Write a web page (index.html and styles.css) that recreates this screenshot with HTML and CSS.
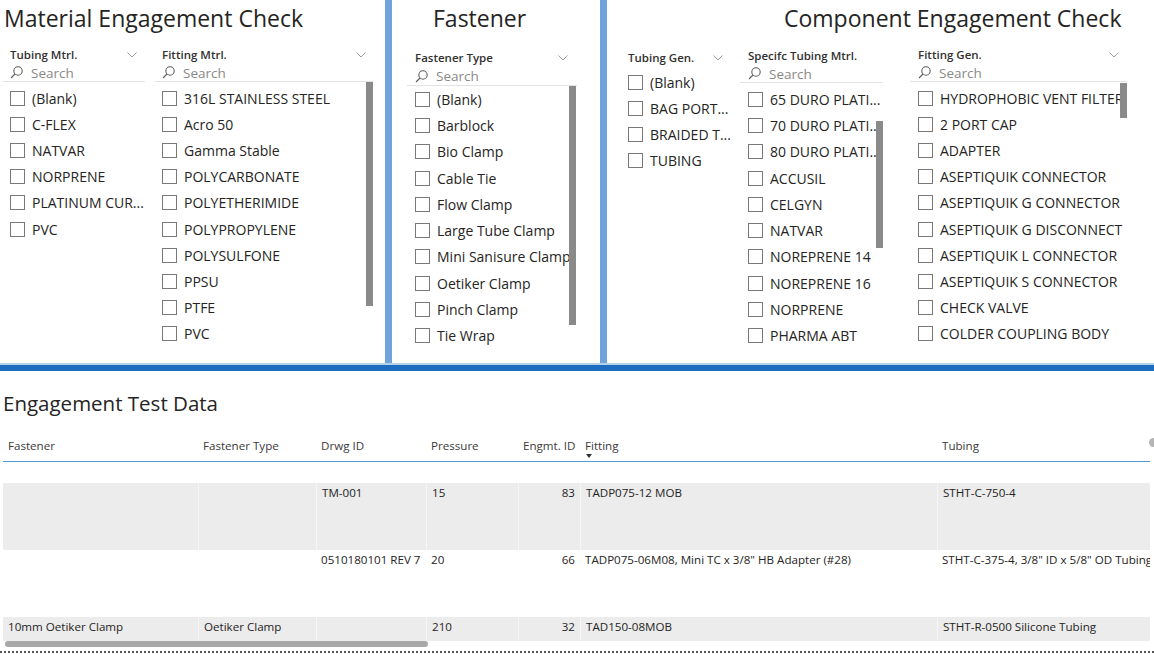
FILE: index.html
```html
<!DOCTYPE html>
<html>
<head>
<meta charset="utf-8">
<title>Engagement Check</title>
<link rel="stylesheet" href="styles.css">
</head>
<body>
<div class="top">
  <section class="panel p1">
    <h1 class="title">Material Engagement Check</h1>
    <div class="slicers">
      <div class="slicer w-tub">
        <div class="sl-head"><span>Tubing Mtrl.</span><svg class="chev" viewBox="0 0 10 6"><polyline points="0.5,0.5 5,5 9.5,0.5"/></svg></div>
        <div class="sl-search"><svg class="mag" viewBox="0 0 13 13"><circle cx="8" cy="5" r="4.2"/><line x1="5" y1="8" x2="1" y2="12"/></svg><span>Search</span></div>
        <ul class="sl-list">
          <li><i class="cb"></i>(Blank)</li>
          <li><i class="cb"></i>C-FLEX</li>
          <li><i class="cb"></i>NATVAR</li>
          <li><i class="cb"></i>NORPRENE</li>
          <li><i class="cb"></i>PLATINUM CUR...</li>
          <li><i class="cb"></i>PVC</li>
        </ul>
      </div>
      <div class="slicer w-fit">
        <div class="sl-head r7"><span>Fitting Mtrl.</span><svg class="chev" viewBox="0 0 10 6"><polyline points="0.5,0.5 5,5 9.5,0.5"/></svg></div>
        <div class="sl-search"><svg class="mag" viewBox="0 0 13 13"><circle cx="8" cy="5" r="4.2"/><line x1="5" y1="8" x2="1" y2="12"/></svg><span>Search</span></div>
        <ul class="sl-list">
          <li><i class="cb"></i>316L STAINLESS STEEL</li>
          <li><i class="cb"></i>Acro 50</li>
          <li><i class="cb"></i>Gamma Stable</li>
          <li><i class="cb"></i>POLYCARBONATE</li>
          <li><i class="cb"></i>POLYETHERIMIDE</li>
          <li><i class="cb"></i>POLYPROPYLENE</li>
          <li><i class="cb"></i>POLYSULFONE</li>
          <li><i class="cb"></i>PPSU</li>
          <li><i class="cb"></i>PTFE</li>
          <li><i class="cb"></i>PVC</li>
          <span class="scroll sc-fit"></span>
        </ul>
      </div>
    </div>
  </section>
  <div class="vbar"></div>
  <section class="panel p2">
    <h1 class="title">Fastener</h1>
    <div class="slicers">
      <div class="slicer w-fas">
        <div class="sl-head low"><span>Fastener Type</span><svg class="chev" viewBox="0 0 10 6"><polyline points="0.5,0.5 5,5 9.5,0.5"/></svg></div>
        <div class="sl-search tall"><svg class="mag" viewBox="0 0 13 13"><circle cx="8" cy="5" r="4.2"/><line x1="5" y1="8" x2="1" y2="12"/></svg><span>Search</span></div>
        <ul class="sl-list flush">
          <li><i class="cb"></i>(Blank)</li>
          <li><i class="cb"></i>Barblock</li>
          <li><i class="cb"></i>Bio Clamp</li>
          <li><i class="cb"></i>Cable Tie</li>
          <li><i class="cb"></i>Flow Clamp</li>
          <li><i class="cb"></i>Large Tube Clamp</li>
          <li><i class="cb"></i>Mini Sanisure Clamp</li>
          <li><i class="cb"></i>Oetiker Clamp</li>
          <li><i class="cb"></i>Pinch Clamp</li>
          <li><i class="cb"></i>Tie Wrap</li>
          <span class="scroll sc-fas"></span>
        </ul>
      </div>
    </div>
  </section>
  <div class="vbar"></div>
  <section class="panel p3">
    <h1 class="title">Component Engagement Check</h1>
    <div class="slicers">
      <div class="slicer w-tgen">
        <div class="sl-head low"><span>Tubing Gen.</span><svg class="chev" viewBox="0 0 10 6"><polyline points="0.5,0.5 5,5 9.5,0.5"/></svg></div>
        <ul class="sl-list nos">
          <li><i class="cb"></i>(Blank)</li>
          <li><i class="cb"></i>BAG PORT...</li>
          <li><i class="cb"></i>BRAIDED T...</li>
          <li><i class="cb"></i>TUBING</li>
        </ul>
      </div>
      <div class="slicer w-spec">
        <div class="sl-head mid"><span>Specifc Tubing Mtrl.</span></div>
        <div class="sl-search"><svg class="mag" viewBox="0 0 13 13"><circle cx="8" cy="5" r="4.2"/><line x1="5" y1="8" x2="1" y2="12"/></svg><span>Search</span></div>
        <ul class="sl-list">
          <li><i class="cb"></i>65 DURO PLATI...</li>
          <li><i class="cb"></i>70 DURO PLATI...</li>
          <li><i class="cb"></i>80 DURO PLATI...</li>
          <li><i class="cb"></i>ACCUSIL</li>
          <li><i class="cb"></i>CELGYN</li>
          <li><i class="cb"></i>NATVAR</li>
          <li><i class="cb"></i>NOREPRENE 14</li>
          <li><i class="cb"></i>NOREPRENE 16</li>
          <li><i class="cb"></i>NORPRENE</li>
          <li><i class="cb"></i>PHARMA ABT</li>
          <span class="scroll sc-spec"></span>
        </ul>
      </div>
      <div class="slicer w-fgen">
        <div class="sl-head"><span>Fitting Gen.</span><svg class="chev" viewBox="0 0 10 6"><polyline points="0.5,0.5 5,5 9.5,0.5"/></svg></div>
        <div class="sl-search"><svg class="mag" viewBox="0 0 13 13"><circle cx="8" cy="5" r="4.2"/><line x1="5" y1="8" x2="1" y2="12"/></svg><span>Search</span></div>
        <ul class="sl-list">
          <li><i class="cb"></i>HYDROPHOBIC VENT FILTER</li>
          <li><i class="cb"></i>2 PORT CAP</li>
          <li><i class="cb"></i>ADAPTER</li>
          <li><i class="cb"></i>ASEPTIQUIK CONNECTOR</li>
          <li><i class="cb"></i>ASEPTIQUIK G CONNECTOR</li>
          <li><i class="cb"></i>ASEPTIQUIK G DISCONNECT</li>
          <li><i class="cb"></i>ASEPTIQUIK L CONNECTOR</li>
          <li><i class="cb"></i>ASEPTIQUIK S CONNECTOR</li>
          <li><i class="cb"></i>CHECK VALVE</li>
          <li><i class="cb"></i>COLDER COUPLING BODY</li>
          <span class="scroll sc-fgen"></span>
        </ul>
      </div>
    </div>
  </section>
</div>
<div class="sep-light"></div>
<div class="sep-dark"></div>
<section class="bottom">
  <h2 class="b-title">Engagement Test Data</h2>
  <div class="table">
    <div class="th">Fastener</div>
    <div class="th">Fastener Type</div>
    <div class="th">Drwg ID</div>
    <div class="th">Pressure</div>
    <div class="th num">Engmt. ID</div>
    <div class="th">Fitting<span class="sort"></span></div>
    <div class="th">Tubing</div>

    <div class="td blank"></div><div class="td blank"></div><div class="td blank"></div><div class="td blank"></div><div class="td blank"></div><div class="td blank"></div><div class="td blank"></div>

    <div class="td g"></div>
    <div class="td g"></div>
    <div class="td g">TM-001</div>
    <div class="td g">15</div>
    <div class="td g num">83</div>
    <div class="td g">TADP075-12 MOB</div>
    <div class="td g">STHT-C-750-4</div>

    <div class="td"></div>
    <div class="td"></div>
    <div class="td">0510180101 REV 7</div>
    <div class="td">20</div>
    <div class="td num">66</div>
    <div class="td">TADP075-06M08, Mini TC x 3/8" HB Adapter (#28)</div>
    <div class="td">STHT-C-375-4, 3/8" ID x 5/8" OD Tubing</div>

    <div class="td g">10mm Oetiker Clamp</div>
    <div class="td g">Oetiker Clamp</div>
    <div class="td g"></div>
    <div class="td g">210</div>
    <div class="td g num">32</div>
    <div class="td g">TAD150-08MOB</div>
    <div class="td g">STHT-R-0500 Silicone Tubing</div>
  </div>
  <span class="vthumb"></span>
  <span class="hscroll"></span>
</section>
<div class="dots"></div>
</body>
</html>
```

FILE: styles.css
```css
* { box-sizing: border-box; margin: 0; padding: 0; }
html, body { width: 1154px; height: 656px; overflow: hidden; background: #fff; }
body { font-family: "Open Sans", "Noto Sans", sans-serif; color: #252423; }

.top { display: flex; height: 363px; }
.panel { background: #fff; overflow: hidden; height: 363px; }
.p1 { width: 385px; }
.p2 { width: 208px; }
.p3 { flex: 1; }
.vbar { width: 7px; background: #6fa3d9; }
.sep-light { height: 2px; background: #b7d0ea; }
.sep-dark { height: 6px; background: #1c6dbf; }

.title { font-size: 23px; font-weight: 400; line-height: 31px; margin-top: 3px; white-space: nowrap; color: #252423; }
.p1 .title { padding-left: 4px; }
.p2 .title { padding-left: 41px; }
.p3 .title { padding-left: 177px; }

.slicers { display: flex; align-items: flex-start; }
.p1 .slicers { padding-left: 3px; gap: 10px; }
.p2 .slicers { padding-left: 15px; }
.p3 .slicers { padding-left: 14px; }

.slicer { position: relative; flex: none; }
.w-tub { width: 142px; }
.w-fit { width: 218px; }
.w-fas { width: 170px; }
.w-tgen { width: 110px; }
.w-spec { width: 143px; margin-left: 9px; }
.w-fgen { width: 217px; margin-left: 27px; }

.sl-head { display: flex; justify-content: space-between; align-items: center; height: 18px; margin-top: 12px; padding: 0 8px 0 7px; font-size: 11.5px; font-weight: 600; line-height: 18px; color: #323130; white-space: nowrap; }
.sl-head.r7 { padding-right: 7px; }
.sl-head.low { margin-top: 15px; }
.sl-head.mid { margin-top: 13px; }
.w-fas .sl-head, .w-spec .sl-head, .w-fgen .sl-head { padding-left: 8px; }
.w-fas .sl-head { padding-right: 9px; }
.chev { width: 10px; height: 6px; fill: none; stroke: #a19f9d; stroke-width: 1; }

.sl-search { display: flex; align-items: center; height: 18px; border-bottom: 1px solid #e3e3e3; padding-left: 7px; font-size: 13.5px; line-height: 18px; color: #8a8886; }
.sl-search.tall { height: 19px; }
.w-fas .sl-search, .w-spec .sl-search, .w-fgen .sl-search { padding-left: 8px; }
.mag { width: 13px; height: 13px; margin-right: 8px; fill: none; stroke: #605e5c; stroke-width: 1.1; }

.sl-list { list-style: none; position: relative; padding-top: 3px; }
.sl-list.flush { padding-top: 0; }
.sl-list.nos { padding-top: 2px; }
.sl-list li { display: flex; align-items: center; height: 26.2px; padding-left: 7px; font-size: 14px; white-space: nowrap; overflow: hidden; color: #252423; }
.w-fas li, .w-spec li, .w-fgen li { padding-left: 8px; }
.w-fas li, .w-spec li { height: 26.3px; }
.cb { display: block; width: 15px; height: 15px; border: 1px solid #7a7877; background: #fff; margin-right: 7px; flex: none; }

.scroll { position: absolute; right: 0; width: 7px; background: #8a8a8a; }
.sc-fit { top: 0; height: 224px; }
.sc-fas { top: 0; right: 1px; height: 239px; }
.sc-spec { top: 38px; height: 127px; }
.sc-fgen { top: 1px; height: 35px; }

.bottom { position: relative; height: 280px; padding-top: 18px; }
.b-title { font-size: 20.5px; font-weight: 400; line-height: 28px; padding-left: 3px; color: #252423; }
.table { display: grid; grid-template-columns: 195px 118px 110px 92px 62px 357px 214px; grid-template-rows: 31px 21px 67px 67px 67px; margin: 14px 0 0 3px; width: 1147px; height: 210px; overflow: hidden; font-size: 11.6px; line-height: 16px; }
.th { padding: 7px 5px 0; color: #3b3a39; border-bottom: 1px solid #4e9ad4; white-space: nowrap; }
.td { padding: 2px 5px 0; white-space: nowrap; overflow: hidden; color: #252423; }
.td.g { background: #ececec; }
.td.g + .td.g { border-left: 1px solid #f6f6f6; }
.num { text-align: right; }
.sort { display: block; width: 0; height: 0; margin-left: 1px; border-left: 3.5px solid transparent; border-right: 3.5px solid transparent; border-top: 4px solid #333; }

.vthumb { position: absolute; left: 1149px; top: 67px; width: 9px; height: 9px; border-radius: 50%; background: #b5b5b5; }
.hscroll { position: absolute; left: 5px; top: 270px; width: 423px; height: 6px; border-radius: 3px; background: #a8a8a8; }
.dots { height: 2px; border-top: 2px dotted #555; }
```
